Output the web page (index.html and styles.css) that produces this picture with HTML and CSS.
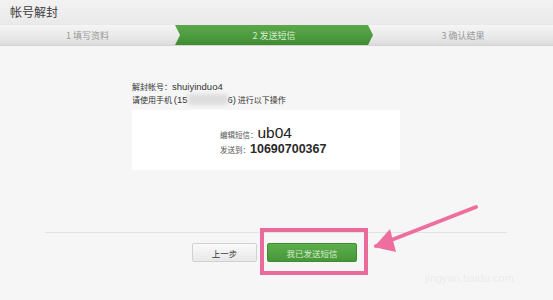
FILE: index.html
```html
<!DOCTYPE html>
<html lang="zh">
<head>
<meta charset="utf-8">
<link rel="stylesheet" href="styles.css">
</head>
<body>
<div class="page">
  <div class="header">帐号解封</div>
  <div class="steps">
    <div class="step s1">1 填写资料</div>
    <div class="step s2">2 发送短信</div>
    <div class="step s3">3 确认结果</div>
  </div>
  <div class="content">
    <div class="info">
      <div class="line">解封帐号：<span class="lat">shuiyinduo4</span></div>
      <div class="line">请使用手机 <span class="lat">(15</span><span class="blur"></span><span class="lat">6)</span> 进行以下操作</div>
    </div>
    <div class="smsbox">
      <div class="row"><span class="lbl">编辑短信：</span><span class="val v1">ub04</span></div>
      <div class="row"><span class="lbl">发送到：</span><span class="val v2">10690700367</span></div>
    </div>
    <div class="sep"></div>
    <div class="buttons">
      <button class="btn prev">上一步</button>
      <button class="btn send">我已发送短信</button>
    </div>
  </div>
  <div class="highlight"></div>
  <svg class="arrow" width="130" height="60" viewBox="0 0 130 60">
    <path d="M104 5 L4 44" stroke="#ee6f9e" stroke-width="4" stroke-linecap="round" fill="none"/>
    <path d="M18 27 L2 45 L24 50 Z" fill="#ee6f9e"/>
  </svg>
  <div class="watermark">jingyan.baidu.com</div>
</div>
</body>
</html>
```
FILE: styles.css
```css
* { box-sizing: border-box; }
html, body { margin: 0; padding: 0; }
body {
  width: 553px;
  height: 300px;
  overflow: hidden;
  background: #f5f5f5;
  font-family: "Noto Sans CJK SC", "Liberation Sans", sans-serif;
}
.page {
  position: relative;
  width: 553px;
  height: 300px;
  background: #f6f6f6;
}
.header {
  height: 25px;
  line-height: 24px;
  padding-left: 10px;
  font-size: 12px;
  color: #3c3c3c;
  background: linear-gradient(#f2f2f2, #e9e9e9);
}
.steps {
  display: flex;
  height: 21px;
  background: linear-gradient(#f5f5f5, #e6e6e6 70%, #dadada);
  border-bottom: 1px solid #d4d4d4;
}
.step {
  font-size: 9px;
  line-height: 21px;
  text-align: center;
  color: #999;
}
.s1 { width: 175px; }
.s2 {
  width: 198px;
  color: #d8ecd0;
  background: linear-gradient(#5aa84a, #4c9a3e 60%, #3f8a33);
  clip-path: polygon(0 0, 193px 0, 198px 50%, 193px 100%, 0 100%, 5px 50%);
}
.s3 { flex: 1; }
.content {
  display: flex;
  flex-direction: column;
  padding-top: 34px;
}
.info {
  padding-left: 132px;
  font-size: 8px;
  color: #333;
}
.lat {
  font-family: "Liberation Sans", sans-serif;
  font-size: 9.5px;
}
.line { height: 13px; line-height: 13px; }
.blur {
  display: inline-block;
  width: 40px;
  height: 11px;
  vertical-align: -2px;
  background: #dcdcdc;
  filter: blur(2px);
}
.smsbox {
  margin-left: 132px;
  margin-top: 4px;
  width: 268px;
  height: 60px;
  background: #fff;
  padding: 14px 0 0 88px;
}
.row {
  height: 17px;
  line-height: 17px;
  display: flex;
  align-items: baseline;
}
.lbl { font-size: 7.5px; color: #555; }
.val {
  font-family: "Liberation Sans", "Noto Sans CJK SC", sans-serif;
  color: #222;
}
.v1 { font-size: 15.5px; }
.v2 { font-size: 12.5px; font-weight: bold; color: #2a2a2a; }
.sep {
  margin: 62px 0 0 45px;
  width: 462px;
  height: 1px;
  background: #e2e2e2;
}
.buttons {
  display: flex;
  gap: 10px;
  padding-left: 192px;
  margin-top: 10px;
}
.btn {
  height: 19px;
  padding: 0;
  font-family: "Noto Sans CJK SC", sans-serif;
  font-size: 8.5px;
  border-radius: 2px;
}
.prev {
  width: 65px;
  color: #333;
  background: linear-gradient(#fafafa, #e8e8e8);
  border: 1px solid #d0d0d0;
}
.send {
  width: 90px;
  color: #d8ecd0;
  background: linear-gradient(#5cae4c, #47973a);
  border: 1px solid #3f8a33;
}
.highlight {
  position: absolute;
  left: 260px;
  top: 228px;
  width: 108px;
  height: 47px;
  border: 4px solid #ea6b9b;
}
.arrow {
  position: absolute;
  left: 372px;
  top: 202px;
}
.watermark {
  position: absolute;
  left: 425px;
  top: 272px;
  font-size: 11px;
  color: #ebebeb;
  font-family: "Liberation Sans", sans-serif;
  filter: blur(0.5px);
}
```
